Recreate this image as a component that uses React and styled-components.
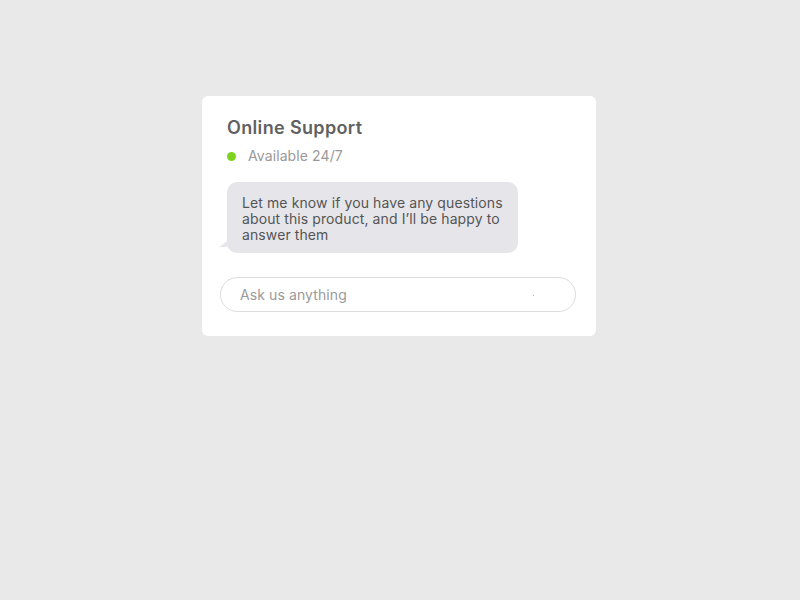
import React from 'react';
import styled, { createGlobalStyle } from 'styled-components';

const GlobalStyle = createGlobalStyle`
  html, body {
    margin: 0;
    background: #e9e9e9;
    font-family: Inter, "Noto Sans", sans-serif;
    -webkit-font-smoothing: antialiased;
  }
`;

const Page = styled.div`
  min-height: 600px;
  padding: 96px 0 0 202px;
  box-sizing: border-box;
`;

const Card = styled.section`
  width: 394px;
  box-sizing: border-box;
  background: #fff;
  border-radius: 6px;
  padding: 19px 20px 24px 18px;
  display: flex;
  flex-direction: column;
`;

const Header = styled.div`
  padding-left: 7px;
  display: flex;
  flex-direction: column;
  gap: 5px;
`;

const Title = styled.h2`
  margin: 0;
  font-size: 18px;
  line-height: 26px;
  font-weight: 600;
  letter-spacing: 0.35px;
  color: #616161;
`;

const Status = styled.div`
  display: flex;
  align-items: center;
  gap: 12px;
  font-size: 14px;
  line-height: 20px;
  letter-spacing: 0.1px;
  color: #999;
`;

const Dot = styled.span`
  width: 9px;
  height: 9px;
  border-radius: 50%;
  background: #7ed321;
`;

const Bubble = styled.p`
  position: relative;
  margin: 16px 0 0 7px;
  width: 291px;
  box-sizing: border-box;
  padding: 13px 10px 10px 15px;
  background: #e6e6ea;
  border-radius: 10px;
  font-size: 14px;
  line-height: 16px;
  letter-spacing: 0.1px;
  color: #555;

  &::before {
    content: '';
    position: absolute;
    left: -8px;
    bottom: 6px;
    width: 14px;
    height: 10px;
    background: #e6e6ea;
    border-bottom-right-radius: 10px 8px;
    clip-path: polygon(0 100%, 100% 0, 100% 100%);
  }
`;

const InputWrap = styled.label`
  margin-top: 24px;
  height: 35px;
  box-sizing: border-box;
  border: 1px solid #dcdcdc;
  border-radius: 18px;
  display: flex;
  align-items: center;
  padding: 0 40px 0 19px;
  position: relative;
`;

const Input = styled.input`
  flex: 1;
  padding: 0;
  border: none;
  outline: none;
  background: transparent;
  font-family: inherit;
  font-size: 14px;
  letter-spacing: 0.1px;
  color: #555;

  &::placeholder {
    color: #9a9a9a;
  }
`;

const Speck = styled.span`
  position: absolute;
  right: 41px;
  top: 17px;
  width: 1px;
  height: 1px;
  background: #bbb;
`;

export default function App() {
  return (
    <>
      <GlobalStyle />
      <Page>
        <Card>
          <Header>
            <Title>Online Support</Title>
            <Status>
              <Dot />
              Available 24/7
            </Status>
          </Header>
          <Bubble>
            Let me know if you have any questions about this product, and I’ll be happy to answer them
          </Bubble>
          <InputWrap>
            <Input placeholder="Ask us anything" />
            <Speck />
          </InputWrap>
        </Card>
      </Page>
    </>
  );
}
